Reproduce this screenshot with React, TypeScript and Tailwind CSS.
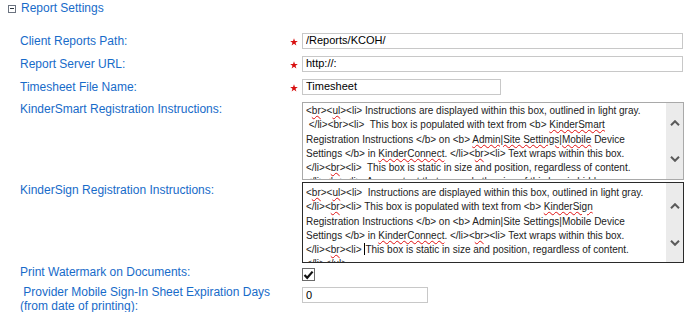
import React from "react";

type Seg = string | { bad: string } | { caret: true };

const boxOne: Seg[][] = [
  ["<", { bad: "br" }, "><", { bad: "ul" }, "><li> Instructions are displayed within this box, outlined in light gray."],
  [" </li><br><li>  This box is populated with text from <b> ", { bad: "KinderSmart" }],
  ["Registration Instructions </b> on <b> ", { bad: "Admin|Site Settings|Mobile" }, " Device"],
  ["Settings </b> in ", { bad: "KinderConnect" }, ". </li><", { bad: "br" }, "><li> Text wraps within this box."],
  ["</li><", { bad: "br" }, "><li>  This box is static in size and position, regardless of content."],
  ["</li><br><li>  Any content that exceeds the size of this box is hidden."],
];

const boxTwo: Seg[][] = [
  ["<", { bad: "br" }, "><", { bad: "ul" }, "><li>  Instructions are displayed within this box, outlined in light gray."],
  ["</li><", { bad: "br" }, "><li> This box is populated with text from <b> ", { bad: "KinderSign" }],
  ["Registration Instructions </b> on <b> Admin|Site Settings|Mobile Device"],
  ["Settings </b> in ", { bad: "KinderConnect" }, ". </li><", { bad: "br" }, "><li> Text wraps within this box."],
  ["</li><", { bad: "br" }, "><li> ", { caret: true }, "This box is static in size and position, regardless of content."],
  ["</li></ul>"],
];

const Chevron = ({ up }: { up?: boolean }) => (
  <svg width="10" height="6" viewBox="0 0 10 6" className="block">
    <polyline
      points={up ? "1,5.2 5,1.2 9,5.2" : "1,0.8 5,4.8 9,0.8"}
      fill="none"
      stroke="#5a5a5a"
      strokeWidth="2"
    />
  </svg>
);

const Star = () => (
  <svg width="8" height="8" viewBox="0 0 10 10" className="block">
    <polygon
      points="5,0.3 6.2,3.7 9.8,3.7 6.9,5.9 8,9.5 5,7.3 2,9.5 3.1,5.9 0.2,3.7 3.8,3.7"
      fill="#d80f0f"
    />
  </svg>
);

function Lines({ lines }: { lines: Seg[][] }) {
  return (
    <>
      {lines.map((line, i) => (
        <div key={i} className="whitespace-pre">
          {line.map((s, j) => {
            if (typeof s === "string") return <span key={j}>{s}</span>;
            if ("caret" in s)
              return <span key={j} className="inline-block w-px h-[12px] bg-black align-[-2px]" />;
            return (
              <span
                key={j}
                className="underline decoration-wavy decoration-[#e01010] decoration-[1px] underline-offset-[1px]"
              >
                {s.bad}
              </span>
            );
          })}
        </div>
      ))}
    </>
  );
}

function FakeTextarea({
  lines,
  focused,
}: {
  lines: Seg[][];
  focused?: boolean;
}) {
  return (
    <div
      className={
        focused
          ? "w-[382px] h-[81px] border border-[#2a2a2a] flex bg-white"
          : "w-[382px] h-[78px] border border-[#a9a9a9] flex bg-white"
      }
    >
      <div
        className={
          focused
            ? "flex-1 overflow-hidden pl-[3px] pt-[3px] text-[10px] leading-[14.3px] text-[#222]"
            : "flex-1 overflow-hidden pl-[3px] pt-[1px] text-[10px] leading-[14.3px] text-[#222]"
        }
      >
        <Lines lines={lines} />
      </div>
      <div
        className={
          focused
            ? "w-[17px] bg-[#ebebeb] flex flex-col items-center justify-between pt-[20px] pb-[16px]"
            : "w-[17px] bg-[#ebebeb] flex flex-col items-center justify-between py-[17px]"
        }
      >
        <Chevron up />
        <Chevron />
      </div>
    </div>
  );
}

const labelCls = "w-[288px] pl-[20px] text-[12px] leading-[14px] text-[#176bc9]";
const inputCls =
  "h-[16px] border border-[#c8c8c8] pl-[3px] text-[11px] text-black outline-none bg-white";

export default function App() {
  return (
    <div className="w-[686px] h-[312px] bg-white overflow-hidden font-['Liberation_Sans',Arial,sans-serif]">
      {/* section header */}
      <div className="flex items-center h-[15px] pl-[8px]">
        <div className="w-[8px] h-[8px] border border-[#6b7380] flex items-center justify-center mt-[2px]">
          <div className="w-[4px] h-px bg-[#2b3540]" />
        </div>
        <span className="ml-[5px] text-[12px] leading-[14px] text-[#176bc9]">Report Settings</span>
      </div>

      <div className="mt-[14px] flex items-center h-[23px]">
        <div className={labelCls}>Client Reports Path:</div>
        <div className="w-[14px] pl-[2px] pt-[3px]">
          <Star />
        </div>
        <input readOnly value="/Reports/KCOH/" className={`${inputCls} w-[381px]`} />
      </div>

      <div className="flex items-center h-[23px]">
        <div className={labelCls}>Report Server URL:</div>
        <div className="w-[14px] pl-[2px] pt-[3px]">
          <Star />
        </div>
        <input readOnly value="http://:" className={`${inputCls} w-[381px]`} />
      </div>

      <div className="flex items-center h-[23px]">
        <div className={labelCls}>Timesheet File Name:</div>
        <div className="w-[14px] pl-[2px] pt-[3px]">
          <Star />
        </div>
        <input readOnly value="Timesheet" className={`${inputCls} w-[199px]`} />
      </div>

      <div className="mt-[4px] flex items-start">
        <div className={`${labelCls} leading-[12px]`}>KinderSmart Registration Instructions:</div>
        <div className="w-[14px]" />
        <FakeTextarea lines={boxOne} />
      </div>

      <div className="mt-[2px] flex items-start">
        <div className={`${labelCls} pt-[1px]`}>KinderSign Registration Instructions:</div>
        <div className="w-[14px]" />
        <FakeTextarea lines={boxTwo} focused />
      </div>

      <div className="flex items-start">
        <div className={`${labelCls} mt-[2px]`}>Print Watermark on Documents:</div>
        <div className="w-[14px]" />
        <div className="mt-[5px] w-[13px] h-[13px] border border-[#6a6a6a] bg-white flex items-center justify-center">
          <svg width="11" height="10" viewBox="0 0 11 10" className="block">
            <polyline points="1.5,5 4.2,7.8 9.6,1.6" fill="none" stroke="#111" strokeWidth="2.2" />
          </svg>
        </div>
      </div>

      <div className="flex items-start">
        <div className={`${labelCls} mt-[4px] pl-[17px] whitespace-pre`}>
          {" Provider Mobile Sign-In Sheet Expiration Days\n(from date of printing):"}
        </div>
        <div className="w-[14px]" />
        <input readOnly value="0" className={`${inputCls} w-[126px] mt-[6px]`} />
      </div>
    </div>
  );
}
